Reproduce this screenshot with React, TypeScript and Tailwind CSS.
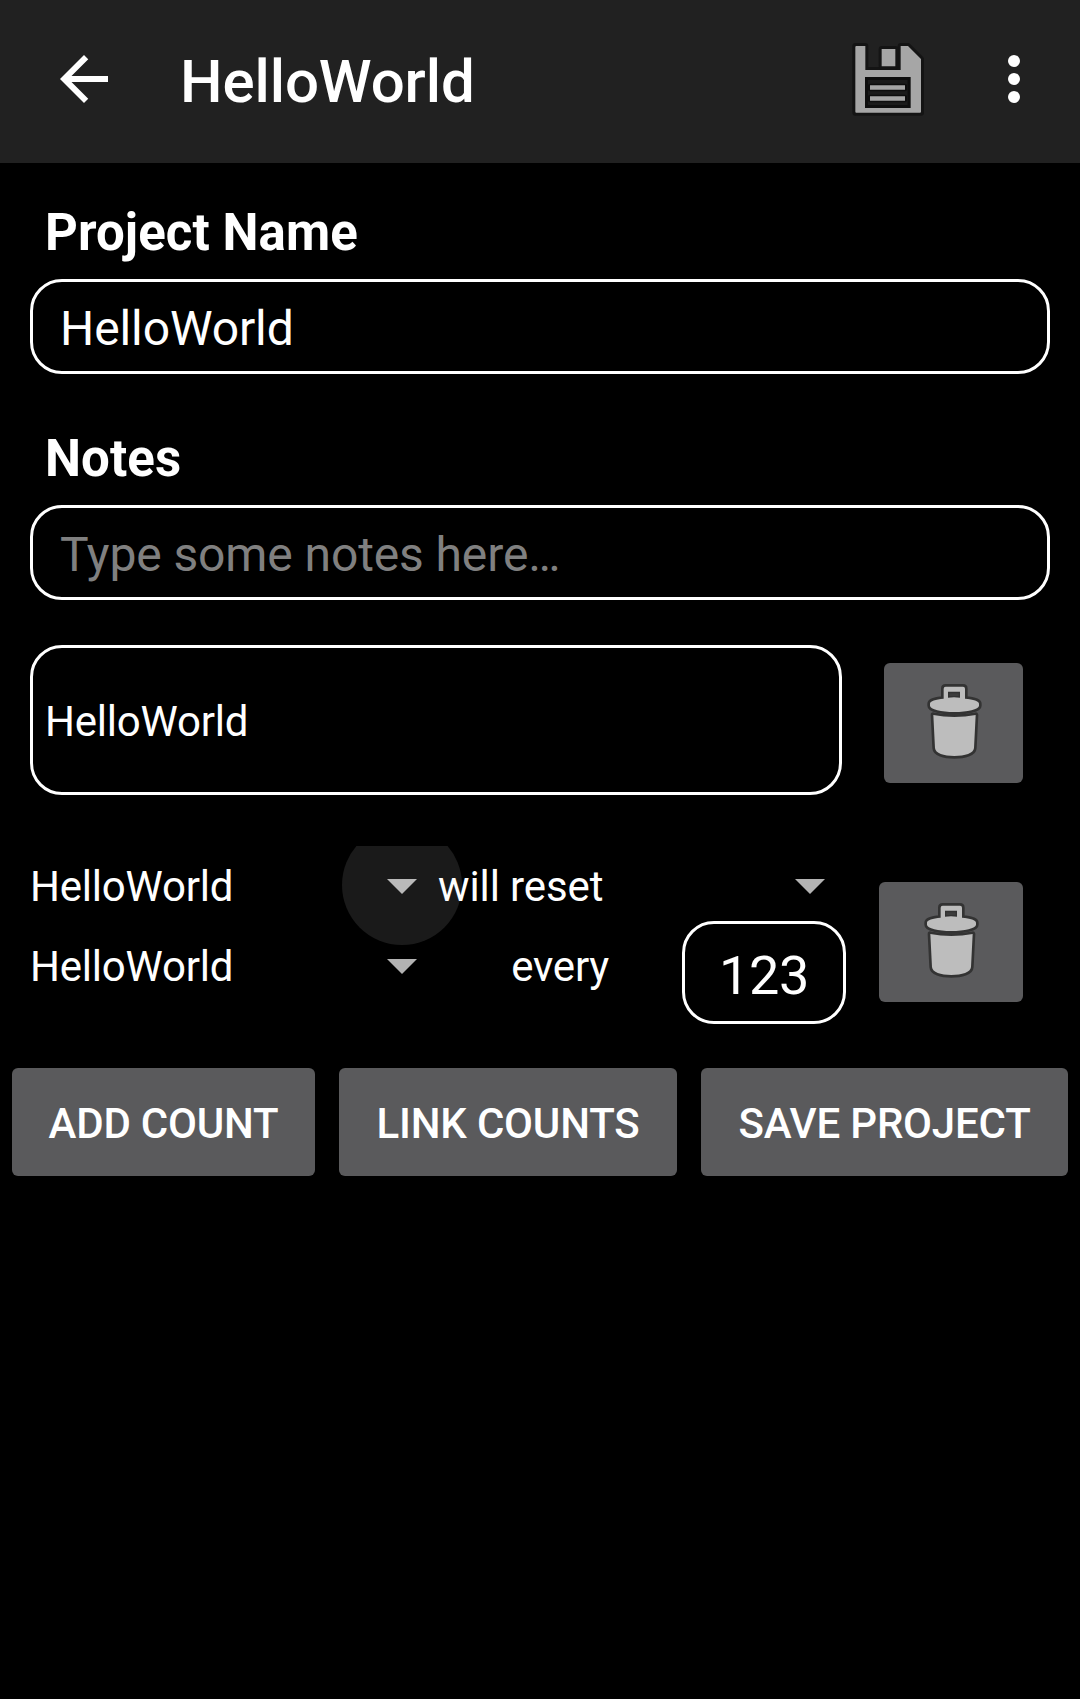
import type { ReactNode } from "react";

function SaveIcon() {
  return (
    <svg viewBox="90 63 228 228" className="h-[76px] w-[76px]" aria-label="Save">
      <g fill="#141414" stroke="#141414" strokeWidth="18" strokeLinejoin="round">
        <path fill="none" d="M106 78H136V150H242V78H264L303 117V278H106Z" />
        <path d="M185 87H226V139H185Z" />
      </g>
      <path fill="#a6a6a6" d="M109 78H136V150H242V78H264L303 117V275Q303 278 300 278H109Q106 278 106 275V81Q106 78 109 78Z" />
      <path fill="#0e0e0e" d="M135 171H272V264H135Z" />
      <path fill="#1b1b1b" d="M144 180H263V255H144Z" />
      <path fill="none" stroke="#0e0e0e" strokeWidth="12" strokeLinejoin="round" d="M150 197H255V208H150ZM150 230H255V241H150Z" />
      <path fill="#a6a6a6" d="M150 196H255V209H150ZM150 229H255V242H150ZM185 87H226V139H185Z" />
    </svg>
  );
}

function TrashIcon({ className }: { className: string }) {
  const body = "M400 255Q430 261 463 261Q496 261 527 255L522 354C521 370 495 378 463 378C431 378 406 370 405 354Z";
  const lid = "M431 206V176Q431 170 437 170H489Q495 170 495 176V206C520 208 537 213 537 221V227C537 238 502 246 463 246C424 246 390 238 390 227V221C390 213 407 208 431 206Z";
  return (
    <svg viewBox="378 156 168 234" className={className} aria-label="Delete">
      <g fill="#333333" stroke="#333333" strokeWidth="16" strokeLinejoin="round">
        <path d={body} />
        <path d={lid} />
      </g>
      <path fill="#bdbdbd" d={body} />
      <path fill="#bdbdbd" d={lid} />
      <path fill="#333333" d="M444 185H480V203Q462 201 444 203Z" />
      <path fill="#3d3d3d" d="M448 190H476V198H448Z" />
    </svg>
  );
}

function Caret({ className }: { className: string }) {
  return (
    <svg viewBox="0 0 30 15" className={`h-[15px] w-[30px] ${className}`}>
      <path fill="currentColor" d="M0 0H30L15 15Z" />
    </svg>
  );
}

function ActionButton({ className, children }: { className: string; children: ReactNode }) {
  return (
    <button className={`h-[108px] rounded-md bg-[#5a5a5c] pt-[3px] text-[42px] font-medium tracking-[-0.2px] whitespace-nowrap ${className}`}>
      {children}
    </button>
  );
}

export default function App() {
  return (
    <div className="flex h-[1699px] w-[1080px] flex-col overflow-hidden bg-black font-['Roboto',sans-serif] text-white">
      <header className="flex h-[163px] items-center bg-[#212121]">
        <svg viewBox="0 0 24 24" className="mb-[5px] ml-12 h-[72px] w-[72px]" aria-label="Back">
          <path fill="currentColor" d="M20 11H7.83l5.59-5.59L12 4l-8 8 8 8 1.41-1.41L7.83 13H20z" />
        </svg>
        <h1 className="ml-[60px] flex-1 text-[60px] leading-[72px] font-medium tracking-[-0.1px]">HelloWorld</h1>
        <div className="mr-[52px] mb-[5px]">
          <SaveIcon />
        </div>
        <svg viewBox="0 0 24 24" className="mr-[30px] mb-[5px] h-[72px] w-[72px]" aria-label="More">
          <g fill="currentColor">
            <circle cx="12" cy="6" r="2" />
            <circle cx="12" cy="12" r="2" />
            <circle cx="12" cy="18" r="2" />
          </g>
        </svg>
      </header>

      <section className="px-[30px]">
        <h2 className="mt-10 mb-4 pl-[15px] text-[51px] leading-[60px] font-bold tracking-[0.08px]">Project Name</h2>
        <div className="flex h-[95px] items-center rounded-[32px] border-3 border-white px-[27px] pt-[5px] text-[48px] leading-[56px] tracking-[-0.1px]">
          HelloWorld
        </div>
        <h2 className="mt-[55px] mb-4 pl-[15px] text-[51px] leading-[60px] font-bold tracking-[0.08px]">Notes</h2>
        <div className="flex h-[95px] items-center rounded-[32px] border-3 border-white px-[27px] pt-[5px] text-[48px] leading-[56px] tracking-[-0.11px] text-[#808080]">
          Type some notes here…
        </div>
      </section>

      <section className="mt-[45px] flex pl-[30px]">
        <div className="flex h-[150px] w-[812px] items-center rounded-[32px] border-3 border-white pt-[3px] pl-3 text-[42px] tracking-[-0.2px]">
          HelloWorld
        </div>
        <button className="mt-[18px] ml-[42px] h-[120px] w-[139px] rounded-md bg-[#5a5a5c] pb-1">
          <TrashIcon className="ml-[42px] h-[78px] w-[56px]" />
        </button>
      </section>

      <section className="mt-[51px] flex pl-[30px] text-[42px] leading-[50px] tracking-[-0.2px]">
        <div className="w-[408px]">
          <div className="relative flex h-20 items-center">
            <div className="absolute top-0 left-[312px] h-[99px] w-[120px] overflow-hidden">
              <div className="-mt-[21px] h-[120px] w-[120px] rounded-full bg-[#1a1a1a]" />
            </div>
            <span className="mt-0.5">HelloWorld</span>
            <Caret className="relative mr-[21px] ml-auto text-[#bababa]" />
          </div>
          <div className="flex h-20 items-center">
            <span className="mt-0.5">HelloWorld</span>
            <Caret className="mr-[21px] ml-auto text-[#b3b3b3]" />
          </div>
        </div>
        <div className="relative w-[408px]">
          <div className="flex h-[75px] items-start">
            <span className="mt-4 tracking-[-0.1px]">will reset</span>
            <Caret className="mt-[33px] mr-[21px] ml-auto text-[#b3b3b3]" />
          </div>
          <div className="flex justify-end">
            <span className="mt-[21px] mr-[73px]">every</span>
            <div className="flex h-[103px] w-[164px] items-center justify-center rounded-[32px] border-3 border-white pt-[6px] text-[54px] tracking-[-0.4px]">
              123
            </div>
          </div>
        </div>
        <button className="mt-9 ml-[33px] h-[120px] w-[144px] rounded-md bg-[#5a5a5c] pb-1">
          <TrashIcon className="ml-[44px] h-[78px] w-[56px]" />
        </button>
      </section>

      <section className="mt-11 flex gap-6 px-3">
        <ActionButton className="w-[303px]">ADD COUNT</ActionButton>
        <ActionButton className="w-[338px]">LINK COUNTS</ActionButton>
        <ActionButton className="w-[367px]">SAVE PROJECT</ActionButton>
      </section>
    </div>
  );
}
